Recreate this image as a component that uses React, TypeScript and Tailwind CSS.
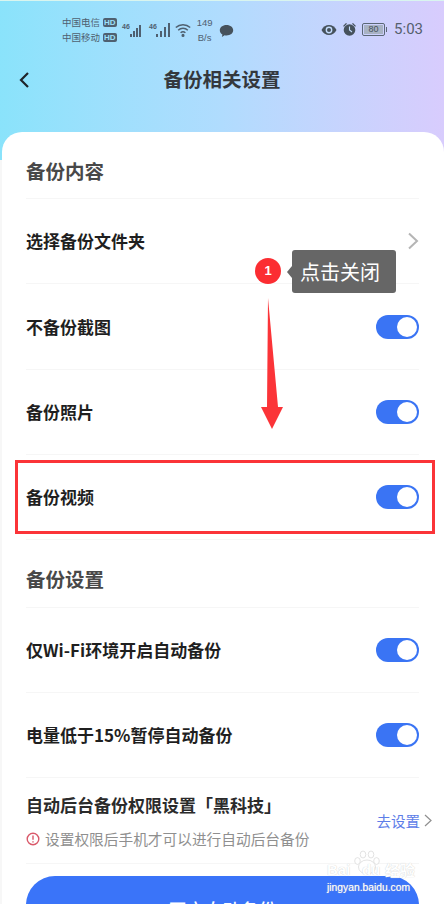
import React from 'react';

const cjk = "font-['Noto_Sans_CJK_SC','Noto_Sans',sans-serif]";

function Toggle() {
  return (
    <div className="flex h-6 w-[43px] items-center justify-end rounded-full bg-[#3a74f4] pr-[2px]">
      <div className="h-5 w-5 rounded-full bg-white" />
    </div>
  );
}

function Row({ label, height, children }: { label: string; height: string; children?: React.ReactNode }) {
  return (
    <div className={`flex items-center justify-between border-b border-[#f6f6f6] ${height}`}>
      <span className="text-[17px] font-bold text-[#1f1f1f]">{label}</span>
      {children}
    </div>
  );
}

function SectionTitle({ title, height }: { title: string; height: string }) {
  return (
    <div className={`flex items-center border-b border-[#f6f6f6] text-[19.500px] font-bold text-[#484848] ${height}`}>
      {title}
    </div>
  );
}

function Signal({ full, className }: { full?: boolean; className?: string }) {
  return (
    <svg width="24" height="16" viewBox="0 0 24 16" className={className} fill="#4f6070">
      <text x="1" y="6.500" fontSize="7" fontWeight="700" fontFamily="Liberation Sans">46</text>
      {full ? (
        <>
          <rect x="8" y="12" width="2" height="3" />
          <rect x="12" y="9" width="2" height="6" />
          <rect x="16" y="5" width="2" height="10" />
          <rect x="20" y="1" width="2" height="14" />
        </>
      ) : (
        <>
          <rect x="9" y="12" width="2" height="3" />
          <rect x="12" y="9" width="2" height="6" />
          <rect x="15" y="6" width="2" height="9" />
          <rect x="18" y="3" width="2" height="12" />
        </>
      )}
    </svg>
  );
}

function HdBadge() {
  return (
    <span className="ml-[3px] rounded-[2px] bg-[#4f6070] px-[1px] font-['Liberation_Sans',sans-serif] text-[8px] font-bold leading-[9px] text-[#9be0fb]">
      HD
    </span>
  );
}

function StatusBar() {
  return (
    <div className="flex h-[44px] items-center pl-[62px] pr-[21px] pt-[13px] text-[#4f6070]">
      <div className="flex flex-col text-[9.500px] leading-[15px]">
        <div className="flex items-center">
          中国电信
          <HdBadge />
        </div>
        <div className="flex items-center">
          中国移动
          <HdBadge />
        </div>
      </div>
      <Signal className="ml-[4px]" />
      <Signal full className="ml-[3px]" />
      <svg width="16" height="14" viewBox="0 0 16 14" className="ml-[3px]" fill="none" stroke="#4f6070" strokeWidth="1.500">
        <path d="M.8 4.500a10.500 10.500 0 0 1 14.400 0" />
        <path d="M3.200 7.200a7 7 0 0 1 9.600 0" />
        <path d="M5.600 9.800a3.600 3.600 0 0 1 4.800 0" />
        <circle cx="8" cy="12.400" r="0.800" fill="#4f6070" />
      </svg>
      <div className="ml-[6px] flex w-[16px] flex-col text-center font-['Liberation_Sans',sans-serif] text-[9.500px] leading-[15px]">
        <span>149</span>
        <span>B/s</span>
      </div>
      <svg width="15" height="14" viewBox="0 0 15 14" className="ml-[6px] mt-[2px]" fill="#46525c">
        <path d="M7.500 1C3.600 1 .8 3.300.8 6.300c0 1.800 1 3.300 2.600 4.300l-.5 2.400 2.700-1.700c.6.100 1.200.2 1.900.2 3.900 0 6.700-2.300 6.700-5.200S11.400 1 7.500 1z" />
      </svg>
      <div className="ml-auto flex items-center">
        <svg width="16" height="12" viewBox="0 0 16 12">
          <path d="M.5 6C2.200 2.800 4.900 1 8 1s5.800 1.800 7.500 5C13.800 9.200 11.100 11 8 11S2.200 9.200.5 6z" fill="#46525c" />
          <circle cx="8" cy="6" r="3.400" fill="#c3dcfd" />
          <circle cx="8" cy="6" r="2" fill="#46525c" />
        </svg>
        <svg width="15" height="15" viewBox="0 0 15 15" className="ml-[5px]" fill="#46525c">
          <circle cx="7.500" cy="8" r="5.800" />
          <path d="M1 4l3-3 1 .8-3 3zM14 4l-3-3-1 .8 3 3z" />
          <path d="M7.500 4.500V8l2.500 2" stroke="#c3dcfd" strokeWidth="1.100" fill="none" />
        </svg>
        <div className="ml-[5px] flex items-center">
          <div className="flex h-[13px] w-[23px] items-center justify-center rounded-[2px] border border-[#5b6876] p-[1px]">
            <div className="flex h-full w-full items-center justify-center bg-[#a8b3c4] font-['Liberation_Sans',sans-serif] text-[9px] leading-none text-[#46525c]">
              80
            </div>
          </div>
          <div className="ml-[1px] h-[5px] w-[1px] bg-[#5b6876]" />
        </div>
        <span className="ml-[7px] font-['Roboto',sans-serif] text-[15px] leading-none text-[#55606e]">5:03</span>
      </div>
    </div>
  );
}

function Watermark() {
  return (
    <div className="absolute left-[327px] top-[850px] h-[45px] w-[90px] pt-[12px] font-['Liberation_Sans',sans-serif] text-white [text-shadow:0_0_1px_#c4c4c4]">
      <svg width="28" height="25" viewBox="0 0 28 25" fill="#ffffff" stroke="#dcdcdc" strokeWidth="0.800" className="absolute left-[26px] top-0">
        <ellipse cx="14" cy="17" rx="8.500" ry="7" />
        <ellipse cx="4.500" cy="11" rx="2.800" ry="3.400" />
        <ellipse cx="10" cy="4.500" rx="2.800" ry="3.500" />
        <ellipse cx="18" cy="4.500" rx="2.800" ry="3.500" />
        <ellipse cx="23.500" cy="11" rx="2.800" ry="3.400" />
      </svg>
      <div className="relative flex items-center text-[15px] font-bold leading-[16px]">
        <span className="w-[35px]">Bai</span>
        <span className="w-[23px]">du</span>
        <span className={`text-[15px] leading-[16px] ${cjk}`}>经验</span>
      </div>
      <div className="relative mt-[2px] whitespace-nowrap text-[10.300px] leading-[15px]">jingyan.baidu.com</div>
    </div>
  );
}

export default function App() {
  return (
    <div className={`relative h-[904px] w-[444px] overflow-hidden bg-[#f7f7f7] ${cjk}`}>
      <div className="h-[160px] border-t border-[#d9f5ef] bg-gradient-to-r from-[#8ae3fb] via-[#b0dcfe] to-[#d8ccfd]">
        <StatusBar />
        <div className="relative flex h-[68px] items-center justify-center">
          <svg width="12" height="18" viewBox="0 0 12 18" className="absolute left-[18px] top-[26px]" fill="none" stroke="#1f2429" strokeWidth="2.200">
            <path d="M10 2 3 9l7 7" />
          </svg>
          <h1 className="text-[19.500px] font-bold text-[#34383d]">备份相关设置</h1>
        </div>
      </div>

      <div className="absolute left-[2px] top-[132px] h-[772px] w-[442px] rounded-t-[20px] bg-white">
        <div className="pl-[24px] pr-[25px]">
          <SectionTitle title="备份内容" height="h-[67px] pt-[12px]" />
          <Row label="选择备份文件夹" height="h-[85px]">
            <svg width="12" height="18" viewBox="0 0 12 18" fill="none" stroke="#b5b5b5" strokeWidth="2">
              <path d="m2 1.500 8 7.500-8 7.500" />
            </svg>
          </Row>
          <Row label="不备份截图" height="h-[86px]">
            <Toggle />
          </Row>
          <Row label="备份照片" height="h-[85px]">
            <Toggle />
          </Row>
          <Row label="备份视频" height="h-[85px]">
            <Toggle />
          </Row>
          <SectionTitle title="备份设置" height="h-[68px] pt-[10px]" />
          <Row label="仅Wi-Fi环境开启自动备份" height="h-[85px]">
            <Toggle />
          </Row>
          <Row label="电量低于15%暂停自动备份" height="h-[85px]">
            <Toggle />
          </Row>
          <div className="relative flex h-[86px] items-center justify-between border-b border-[#f6f6f6]">
            <div className="flex flex-col">
              <span className="text-[17px] font-bold leading-[24px] text-[#2b2b2b]">自动后台备份权限设置「黑科技」</span>
              <div className="mt-[12px] flex items-center gap-[5px] text-[14.700px] leading-[20px] text-[#8f8f8f]">
                <svg width="14" height="14" viewBox="0 0 14 14" fill="none" stroke="#d9596a" strokeWidth="1.400">
                  <circle cx="7" cy="7" r="5.800" />
                  <path d="M7 3.500v4.300M7 9.300v1.300" />
                </svg>
                设置权限后手机才可以进行自动后台备份
              </div>
            </div>
            <div className="absolute right-[-13px] top-[32px] flex items-center gap-[4px] text-[14.500px] text-[#5d7de8]">
              去设置
              <svg width="8" height="13" viewBox="0 0 8 13" fill="none" stroke="#8f8f8f" strokeWidth="1.200">
                <path d="m1 1 6 5.500L1 12" />
              </svg>
            </div>
          </div>
          <div className="mt-[12px] flex h-[66px] items-center justify-center rounded-[29px] bg-[#3a74f9] text-[18px] font-medium text-white">
            开启自动备份
          </div>
        </div>
      </div>

      {/* baidu jingyan annotations sit over the screenshot */}
      <div className="absolute left-[15px] top-[460px] h-[74px] w-[420px] border-[3px] border-[#fb3438]" />

      <div className="absolute left-[255px] top-[258px] flex h-[26px] w-[26px] items-center justify-center rounded-full bg-[#fb2d32] font-['Liberation_Sans',sans-serif] text-[13px] font-bold text-white">
        1
      </div>
      <div className="absolute left-[292px] top-[250px] flex h-[43px] w-[104px] items-center justify-start rounded-[3px] bg-[#666666] pl-[8px] text-[20px] text-white">
        点击关闭
        <div className="absolute left-[-5px] top-[16px] h-0 w-0 border-y-[6px] border-r-[5px] border-y-transparent border-r-[#666666]" />
      </div>
      <svg width="24" height="134" viewBox="0 0 24 134" className="absolute left-[261px] top-[297px]" fill="#fb3438">
        <path d="M7 1 17 110h5L11 132 0 110h6z" />
      </svg>

      <Watermark />
    </div>
  );
}
